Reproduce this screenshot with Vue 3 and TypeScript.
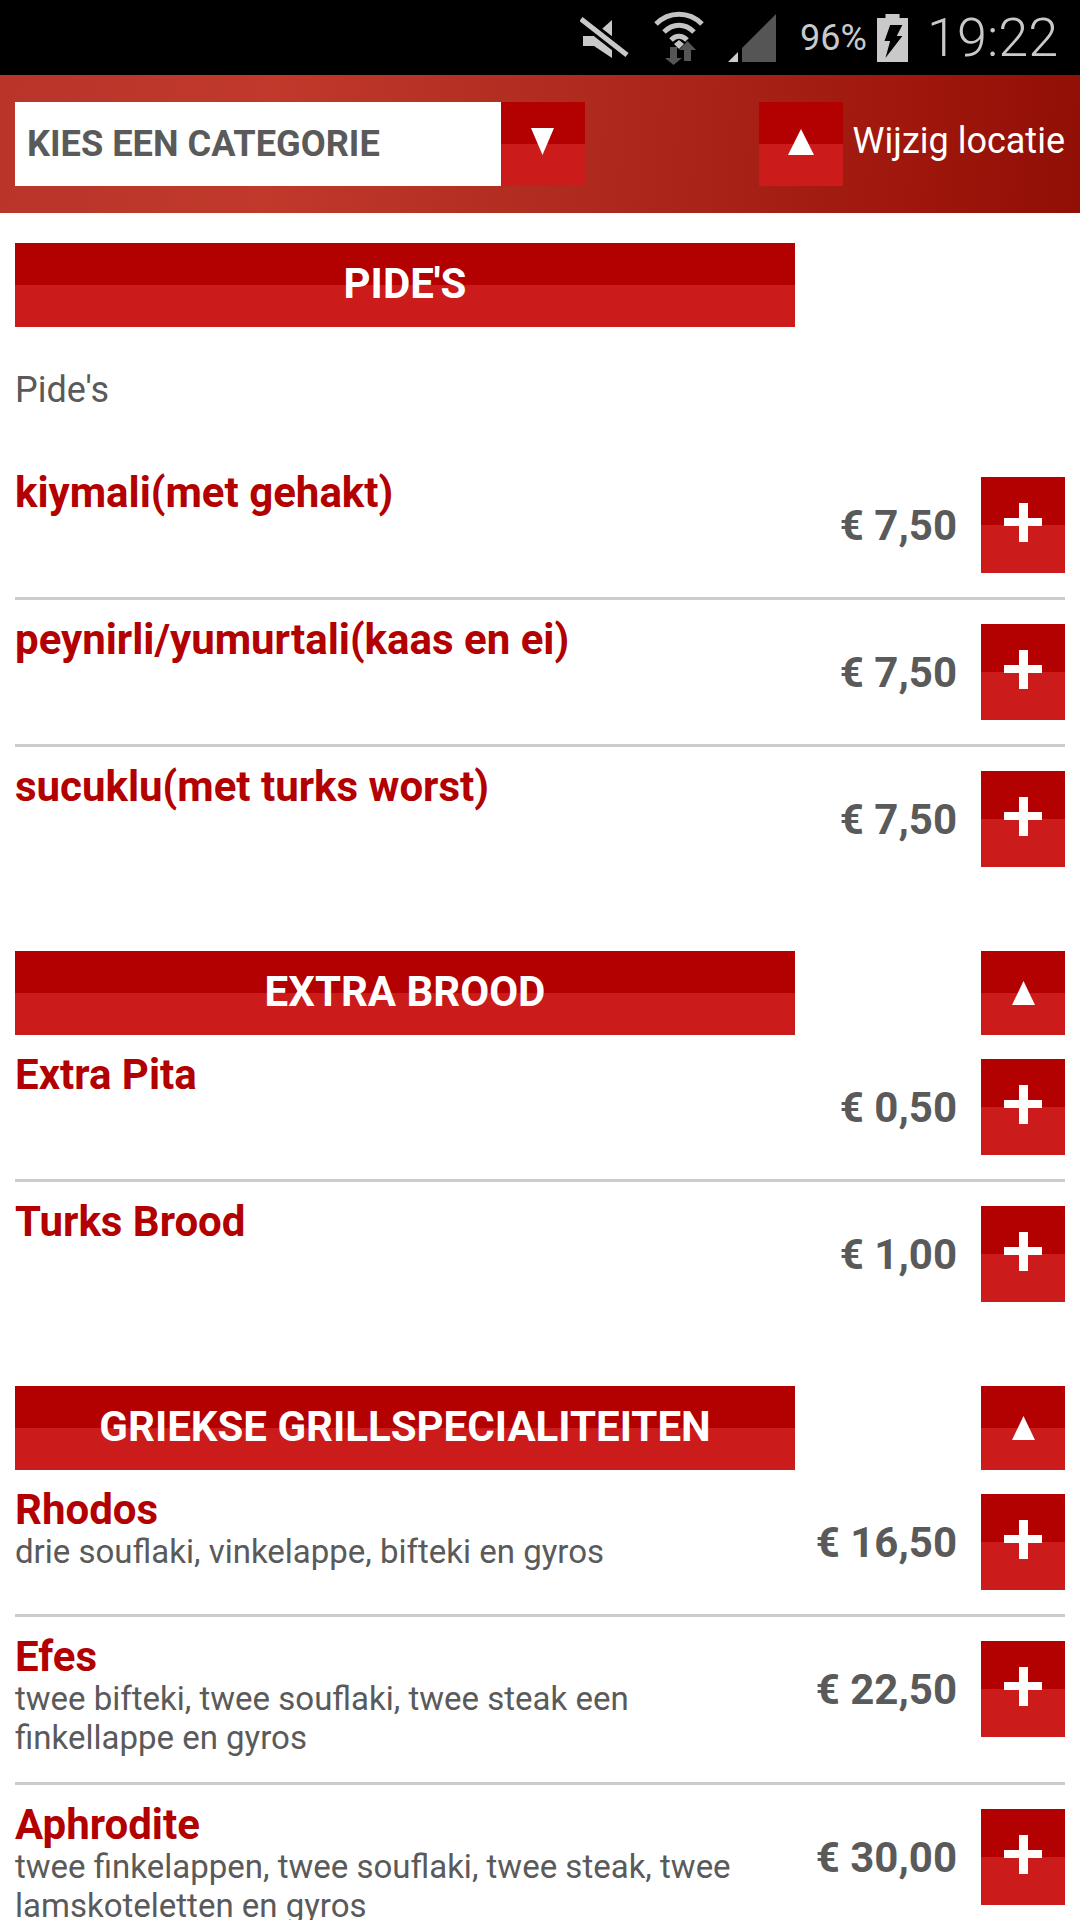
<template>
  <div class="page">
    <div class="status-bar">
      <svg class="ic-mute" width="50" height="48" viewBox="0 0 50 48">
        <path d="M3 22h11L32 6v38L14 32H3z" fill="#c9c9c9" />
        <path d="M1 5l46 36" stroke="#000" stroke-width="11" />
        <path d="M1 5l46 36" stroke="#c9c9c9" stroke-width="5" />
      </svg>
      <svg class="ic-wifi" width="50" height="54" viewBox="0 0 50 54">
        <path d="M2 13C15 0 35 0 48 13" fill="none" stroke="#c4c4c4" stroke-width="5" />
        <path d="M10 21c9-9 21-9 30 0" fill="none" stroke="#c4c4c4" stroke-width="5" />
        <path d="M17 29c5-5 11-5 16 0" fill="none" stroke="#c4c4c4" stroke-width="5" />
        <path d="M20 33l5-4 5 4-5 5z" fill="#c4c4c4" />
        <path d="M16 36h7v11h5l-8.500 7-8.500-7h5z" fill="#555" />
        <path d="M30 50h7V39h5l-8.500-9-8.500 9h5z" fill="#555" />
      </svg>
      <svg class="ic-signal" width="48" height="48" viewBox="0 0 48 48">
        <path d="M48 0v48H14v-14z" fill="#555" />
        <path d="M0 48l10-10v10z" fill="#ccc" />
      </svg>
      <span class="battery-pct">96%</span>
      <svg class="ic-battery" width="31" height="48" viewBox="0 0 33 48" preserveAspectRatio="none">
        <path d="M9 0h15v4h9v44H0V4h9z" fill="#c9c9c9" />
        <path d="M14 11h13l-6 11h6L9 44l5-17H8z" fill="#000" />
      </svg>
      <span class="clock">19:22</span>
    </div>

    <header class="top-bar">
      <div class="select-box">KIES EEN CATEGORIE</div>
      <button class="split-btn select-arrow">
        <svg width="23" height="27" viewBox="0 0 23 27"><path d="M0 0h23L11.500 27z" fill="#fff" /></svg>
      </button>
      <button class="split-btn location-btn">
        <svg width="26" height="26" viewBox="0 0 26 26"><path d="M13 0l13 26H0z" fill="#fff" /></svg>
      </button>
      <span class="location-label">Wijzig locatie</span>
    </header>

    <section v-for="section in sections" :key="section.title" class="section">
      <div class="section-head">
        <h2 class="section-title">{{ section.title }}</h2>
        <button v-if="section.collapsible" class="split-btn collapse-btn">
          <svg width="23" height="24" viewBox="0 0 23 24"><path d="M11.500 0L23 24H0z" fill="#fff" /></svg>
        </button>
      </div>
      <p v-if="section.intro" class="section-intro">{{ section.intro }}</p>
      <div v-for="item in section.items" :key="item.name" class="row">
        <div class="row-text">
          <div class="row-name">{{ item.name }}</div>
          <div v-if="item.desc" class="row-desc">{{ item.desc }}</div>
        </div>
        <div class="row-price">€ {{ item.price }}</div>
        <button class="split-btn add-btn">
          <svg width="38" height="39" viewBox="0 0 38 39"><path d="M15 0h9v15h14v8H24v16h-9V23H0v-8h15z" fill="#fff" /></svg>
        </button>
      </div>
    </section>
  </div>
</template>

<script setup lang="ts">
interface Item {
  name: string;
  desc?: string;
  price: string;
}

interface Section {
  title: string;
  intro?: string;
  collapsible: boolean;
  items: Item[];
}

const sections: Section[] = [
  {
    title: "PIDE'S",
    intro: "Pide's",
    collapsible: false,
    items: [
      { name: 'kiymali(met gehakt)', price: '7,50' },
      { name: 'peynirli/yumurtali(kaas en ei)', price: '7,50' },
      { name: 'sucuklu(met turks worst)', price: '7,50' },
    ],
  },
  {
    title: 'EXTRA BROOD',
    collapsible: true,
    items: [
      { name: 'Extra Pita', price: '0,50' },
      { name: 'Turks Brood', price: '1,00' },
    ],
  },
  {
    title: 'GRIEKSE GRILLSPECIALITEITEN',
    collapsible: true,
    items: [
      { name: 'Rhodos', desc: 'drie souflaki, vinkelappe, bifteki en gyros', price: '16,50' },
      { name: 'Efes', desc: 'twee bifteki, twee souflaki, twee steak een finkellappe en gyros', price: '22,50' },
      { name: 'Aphrodite', desc: 'twee finkelappen, twee souflaki, twee steak, twee lamskoteletten en gyros', price: '30,00' },
    ],
  },
];
</script>

<style>
html,
body {
  margin: 0;
  background: #fff;
  overflow: hidden;
}
</style>

<style scoped>
.page {
  width: 1080px;
  height: 1920px;
  overflow: hidden;
  background: #fff;
  font-family: Roboto, "Liberation Sans", sans-serif;
}

.status-bar {
  height: 75px;
  background: #000;
  display: flex;
  align-items: center;
  color: #c9c9c9;
}

.ic-mute {
  margin-left: 580px;
}

.ic-wifi {
  margin-left: 24px;
}

.ic-signal {
  margin-left: 24px;
}

.battery-pct {
  margin-left: 24px;
  font-size: 36px;
  width: 77px;
}

.clock {
  margin-left: 19px;
  font-size: 54px;
  font-weight: 300;
}

.top-bar {
  height: 138px;
  box-sizing: border-box;
  padding: 27px 15px;
  display: flex;
  align-items: center;
  background: linear-gradient(94deg, #b9352a 0%, #c0392b 25%, #ae2a1e 55%, #9e160c 85%, #910f05 100%);
}

.select-box {
  width: 486px;
  height: 84px;
  box-sizing: border-box;
  background: #fff;
  color: #5a5a5a;
  font-size: 36.200px;
  font-weight: 700;
  line-height: 84px;
  padding-left: 12px;
}

.split-btn {
  border: 0;
  padding: 0;
  width: 84px;
  height: 84px;
  flex: none;
  display: flex;
  align-items: center;
  justify-content: center;
  background: linear-gradient(#b30000 50%, #cc1b1b 50%);
}

.select-arrow svg {
  margin-top: -5px;
}

.location-btn {
  margin-left: 174px;
}

.location-btn svg {
  margin-top: -4px;
}

.location-label {
  margin-left: 10px;
  padding-bottom: 6px;
  color: #fff;
  font-size: 36px;
  white-space: nowrap;
}

.section {
  padding: 30px 15px 60px;
}

.section + .section {
  padding-top: 0;
}

.section-head {
  display: flex;
  justify-content: space-between;
}

.section-title {
  width: 780px;
  height: 84px;
  margin: 0;
  background: linear-gradient(#b30000 50%, #cc1b1b 50%);
  color: #fff;
  font-size: 42px;
  font-weight: 700;
  line-height: 82px;
  text-align: center;
}

.section-intro {
  margin: 42px 0 0;
  height: 36px;
  color: #5a5a5a;
  font-size: 36px;
  line-height: 43px;
}

.section-intro + .row {
  margin-top: 48px;
}

.row {
  display: flex;
  align-items: flex-start;
  padding: 24px 0;
}

.row + .row {
  border-top: 3px solid #ccc;
}

.row-text {
  width: 730px;
  flex: none;
}

.row-name {
  color: #b30000;
  font-size: 42px;
  font-weight: 700;
  line-height: 31px;
  padding-bottom: 7px;
}

.row-desc {
  color: #5a5a5a;
  font-size: 33px;
  line-height: 39px;
  padding-bottom: 1px;
}

.row-price {
  flex: 1;
  height: 96px;
  line-height: 98px;
  text-align: right;
  color: #5a5a5a;
  font-size: 42px;
  font-weight: 700;
  white-space: nowrap;
}

.add-btn {
  height: 96px;
  margin-left: 24px;
}

.add-btn svg {
  margin-top: -6px;
}
</style>
